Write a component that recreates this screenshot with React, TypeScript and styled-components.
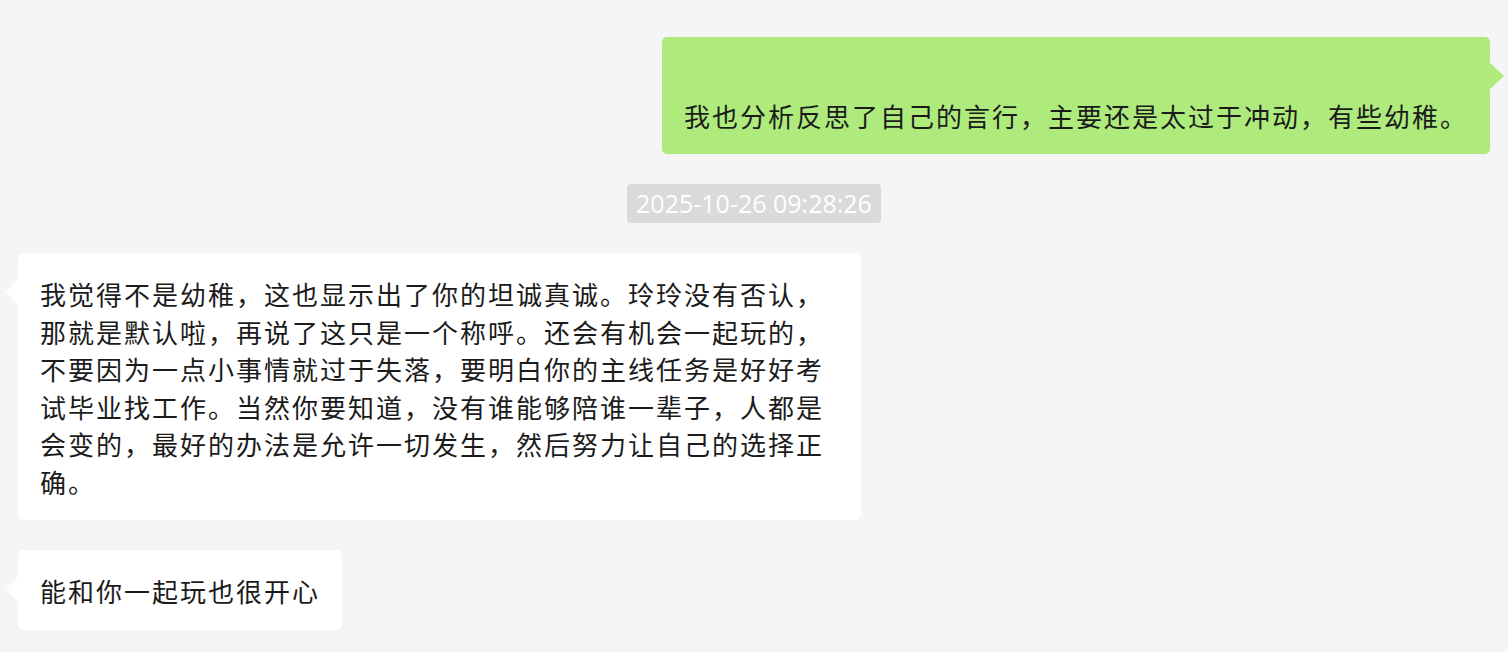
import styled, {createGlobalStyle} from "styled-components";

const GlobalStyle = createGlobalStyle`
  html, body {
    margin: 0;
    padding: 0;
    background: #f5f5f5;
  }
`;

const ChatArea = styled.div`
  width: 1508px;
  height: 652px;
  overflow: hidden;
  box-sizing: border-box;
  padding: 37px 18px 0 18px;
  display: flex;
  flex-direction: column;
  gap: 30px;
  background: #f5f5f5;
  font-family: "Noto Sans CJK SC", "Noto Sans", sans-serif;
`;

const Row = styled.div<{ $mine?: boolean }>`
  display: flex;
  justify-content: ${p => p.$mine ? "flex-end" : "flex-start"};
`;

const Bubble = styled.div<{ $mine?: boolean; $width?: number }>`
  position: relative;
  box-sizing: border-box;
  ${p => p.$width ? `width: ${p.$width}px;` : ""}
  padding: 22px 22px 20px 22px;
  border-radius: 5px;
  background: ${p => p.$mine ? "#aeea7c" : "#ffffff"};
  color: #1b1b1b;
  font-size: 26px;
  letter-spacing: 2px;
  line-height: 37.5px;
  white-space: nowrap;

  &::before {
    content: "";
    position: absolute;
    top: 26px;
    ${p => p.$mine ? "right: -14px;" : "left: -12px;"}
    border-top: 13px solid transparent;
    border-bottom: 13px solid transparent;
    ${p => p.$mine
        ? "border-left: 14px solid #aeea7c;"
        : "border-right: 12px solid #ffffff;"}
  }
`;

const Line = styled.div`
  min-height: 37.5px;
`;

const TimeRow = styled.div`
  display: flex;
  justify-content: center;
`;

const TimeStamp = styled.div`
  background: #dadada;
  color: #ffffff;
  border-radius: 4px;
  padding: 0 9px;
  height: 39px;
  line-height: 39px;
  font-family: "Open Sans", "Noto Sans", sans-serif;
  font-size: 25px;
`;

const replyLines = [
    "我觉得不是幼稚，这也显示出了你的坦诚真诚。玲玲没有否认，",
    "那就是默认啦，再说了这只是一个称呼。还会有机会一起玩的，",
    "不要因为一点小事情就过于失落，要明白你的主线任务是好好考",
    "试毕业找工作。当然你要知道，没有谁能够陪谁一辈子，人都是",
    "会变的，最好的办法是允许一切发生，然后努力让自己的选择正",
    "确。",
];

export default function App() {
    return (
        <>
            <GlobalStyle/>
            <ChatArea>
                <Row $mine>
                    <Bubble $mine>
                        <Line/>
                        <Line>我也分析反思了自己的言行，主要还是太过于冲动，有些幼稚。</Line>
                    </Bubble>
                </Row>

                <TimeRow>
                    <TimeStamp>2025-10-26 09:28:26</TimeStamp>
                </TimeRow>

                <Row>
                    <Bubble $width={843}>
                        {replyLines.map(text => <Line key={text}>{text}</Line>)}
                    </Bubble>
                </Row>

                <Row>
                    <Bubble>
                        <Line>能和你一起玩也很开心</Line>
                    </Bubble>
                </Row>
            </ChatArea>
        </>
    )
}
